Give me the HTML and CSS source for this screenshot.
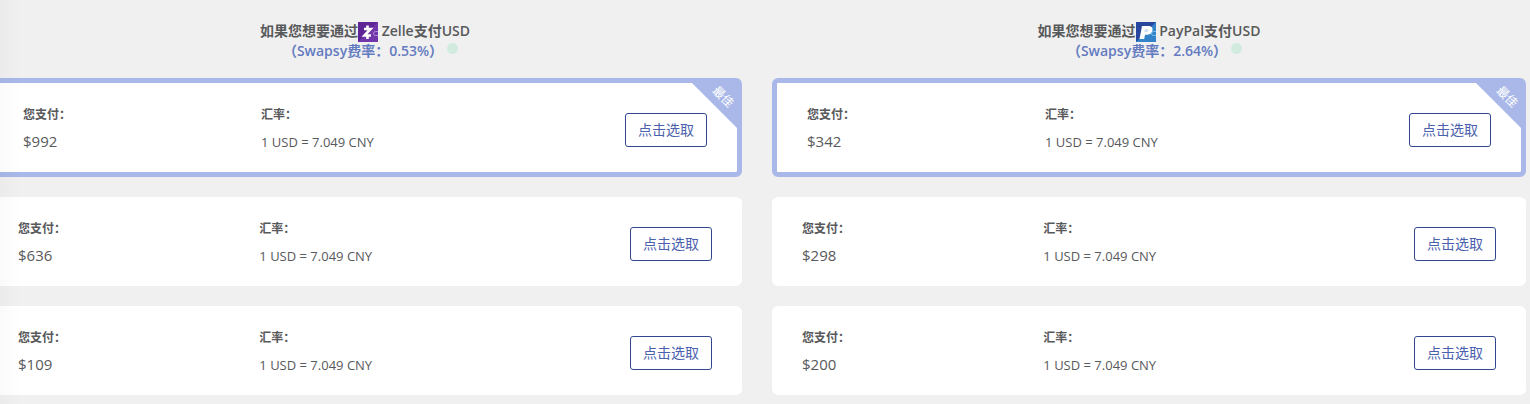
FILE: index.html
```html
<!DOCTYPE html>
<html lang="zh-CN">
<head>
    <meta charset="UTF-8">
    <meta name="viewport" content="width=device-width, initial-scale=1.0">
    <title>Swapsy</title>
    <link rel="stylesheet" href="styles.css">
</head>
<body>
    <main class="offers">
        <section class="column">
            <h2 class="heading">
                <span class="method">如果您想要通过<svg class="logo" viewBox="0 0 20 20" aria-hidden="true">
                    <rect width="20" height="20" fill="#5f2596"/>
                    <path d="M0 20 20 0v20z" fill="#7236ab"/>
                    <path d="M9.500 3.500v3M9.500 14v3M6 7h6.500L6.500 13.500H13" fill="none" stroke="#fff" stroke-width="2.600"/>
                    <path d="M20 9.500h-2.500a2 2 0 0 0 0 4H20" fill="none" stroke="#b08bd6"/>
                </svg> Zelle支付USD</span>
                <span class="fee">（Swapsy费率：0.53%）<i class="dot"></i></span>
            </h2>

            <article class="card best">
                <div class="cell">
                    <h3 class="label">您支付：</h3>
                    <p class="amount">$992</p>
                </div>
                <div class="cell">
                    <h3 class="label">汇率：</h3>
                    <p class="rate">1 USD = 7.049 CNY</p>
                </div>
                <button class="select" type="button">点击选取</button>
                <div class="ribbon"><span>最佳</span></div>
            </article>

            <article class="card">
                <div class="cell">
                    <h3 class="label">您支付：</h3>
                    <p class="amount">$636</p>
                </div>
                <div class="cell">
                    <h3 class="label">汇率：</h3>
                    <p class="rate">1 USD = 7.049 CNY</p>
                </div>
                <button class="select" type="button">点击选取</button>
            </article>

            <article class="card">
                <div class="cell">
                    <h3 class="label">您支付：</h3>
                    <p class="amount">$109</p>
                </div>
                <div class="cell">
                    <h3 class="label">汇率：</h3>
                    <p class="rate">1 USD = 7.049 CNY</p>
                </div>
                <button class="select" type="button">点击选取</button>
            </article>
        </section>

        <section class="column">
            <h2 class="heading">
                <span class="method">如果您想要通过<svg class="logo" viewBox="0 0 20 20" aria-hidden="true">
                    <rect width="20" height="20" fill="#2a479f"/>
                    <path d="M0 20 20 0v20z" fill="#3383cb"/>
                    <path d="M6 4h6.500q4.500.2 4 4.500-.8 4-5 4.200H9L8.200 17H3.500z" fill="#fff"/>
                    <path d="M8.800 7.200h2.700q1.200.2 1 1.400-.3 1.300-1.700 1.400H8.300z" fill="#cfdff2"/>
                    <path d="M20 9.500h-2.500a2 2 0 0 0 0 4H20" fill="none" stroke="#7cc0ee"/>
                </svg> PayPal支付USD</span>
                <span class="fee">（Swapsy费率：2.64%）<i class="dot"></i></span>
            </h2>

            <article class="card best">
                <div class="cell">
                    <h3 class="label">您支付：</h3>
                    <p class="amount">$342</p>
                </div>
                <div class="cell">
                    <h3 class="label">汇率：</h3>
                    <p class="rate">1 USD = 7.049 CNY</p>
                </div>
                <button class="select" type="button">点击选取</button>
                <div class="ribbon"><span>最佳</span></div>
            </article>

            <article class="card">
                <div class="cell">
                    <h3 class="label">您支付：</h3>
                    <p class="amount">$298</p>
                </div>
                <div class="cell">
                    <h3 class="label">汇率：</h3>
                    <p class="rate">1 USD = 7.049 CNY</p>
                </div>
                <button class="select" type="button">点击选取</button>
            </article>

            <article class="card">
                <div class="cell">
                    <h3 class="label">您支付：</h3>
                    <p class="amount">$200</p>
                </div>
                <div class="cell">
                    <h3 class="label">汇率：</h3>
                    <p class="rate">1 USD = 7.049 CNY</p>
                </div>
                <button class="select" type="button">点击选取</button>
            </article>
        </section>
    </main>
</body>
</html>
```

FILE: styles.css
```css
* {
    box-sizing: border-box;
}

body {
    margin: 0;
    background-color: #f0f0f0;
    color: #58595b;
    font-family: "Open Sans", "Noto Sans CJK SC", sans-serif;
    overflow-x: hidden;
}

/* soft shadow along the left edge */
body::before {
    content: "";
    position: fixed;
    top: 0;
    bottom: 0;
    left: 0;
    width: 20px;
    background: linear-gradient(to right, rgba(0, 0, 0, 0.02), transparent);
    z-index: 1;
    pointer-events: none;
}

.offers {
    display: grid;
    grid-template-columns: 1fr 1fr;
    gap: 30px;
    margin-left: -12px;
    padding: 21px 4px 9px 0;
}

.column {
    display: flex;
    flex-direction: column;
    gap: 20px;
}

.heading {
    display: flex;
    flex-direction: column;
    align-items: center;
    margin: 0 0 -3px;
    font-size: 14px;
    font-weight: 600;
    line-height: 20px;
}

.method,
.fee {
    height: 20px;
    white-space: nowrap;
}

.logo {
    width: 20px;
    height: 20px;
    vertical-align: middle;
}

.fee {
    position: relative;
    padding-right: 4px;
    color: #647bc1;
}

.dot {
    position: absolute;
    top: 2px;
    left: 100%;
    width: 11px;
    height: 11px;
    border-radius: 50%;
    background-color: #d1ecdf;
}

.card {
    position: relative;
    display: grid;
    grid-template-columns: 1fr 1fr 1fr;
    gap: 30px;
    padding: 20px 30px;
    border-radius: 6px;
    background-color: #fff;
}

.best {
    border: 5px solid #a9b8e8;
}

.label {
    margin: 0 0 3px;
    font-size: 12px;
    font-weight: 600;
    line-height: 24px;
}

.amount,
.rate {
    margin: 0;
    font-size: 15px;
    line-height: 22px;
}

.rate {
    padding-top: 3px;
    font-size: 13px;
    line-height: 19px;
}

.select {
    justify-self: end;
    align-self: start;
    height: 34px;
    margin-top: 10px;
    padding: 0 12px 2px;
    border: 1px solid #33478f;
    border-radius: 3px;
    background-color: #fff;
    color: #4a61ae;
    font-family: inherit;
    font-size: 14px;
    cursor: pointer;
}

.ribbon {
    position: absolute;
    top: 0;
    right: 0;
    width: 45px;
    height: 45px;
    background-color: #a9b8e8;
    clip-path: polygon(0 0, 100% 0, 100% 100%);
}

.ribbon span {
    position: absolute;
    top: 4px;
    right: 2px;
    color: #fff;
    font-size: 12px;
    line-height: 20px;
    transform: rotate(45deg);
}
```
